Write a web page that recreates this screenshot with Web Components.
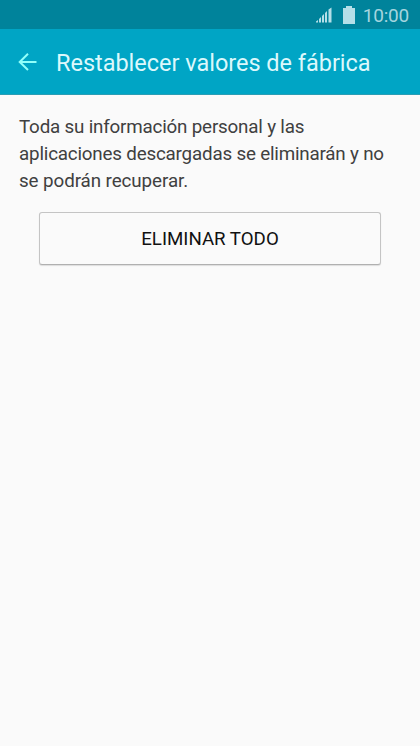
<!DOCTYPE html>
<html lang="es"><head><meta charset="utf-8"><title>Restablecer valores de fábrica</title>
<style>html,body{margin:0;height:100%;background:#fafafa;font-family:Roboto,sans-serif}</style></head><body>
<reset-screen></reset-screen>
<script>
const define=(name,html)=>customElements.define(name,class extends HTMLElement{constructor(){super();this.attachShadow({mode:'open'}).innerHTML=html;}});
define('status-bar',`<style>:host{display:flex;height:29px;box-sizing:border-box;background:#00839b;color:#b5dfe8;align-items:center;justify-content:flex-end;padding-right:11px;font-size:19px}.signal{margin-right:11px}.battery{margin-right:8px}svg{display:block}span{line-height:29px;padding-top:1px;letter-spacing:-.2px;color:#a5d5df}</style>
<svg class="signal" width="16" height="16" viewBox="0 0 16 16" fill="currentColor"><path d="M0 15.5v-1l2-1.5v2.5zM3 15.5v-3.5l2-2v5.5zM6 15.5v-6.5l2-2v8.5zM9 15.5v-9.5l2-2v11.5zM12.5 15.5v-13l3-2v15z"/></svg>
<svg class="battery" width="12" height="18" viewBox="0 0 12 18" fill="currentColor"><path d="M3 0h6v2h3v16H0V2h3z"/></svg><span><slot></slot></span>`);
define('app-bar',`<style>:host{display:flex;height:66px;box-sizing:border-box;background:#00a5c5;border-bottom:1px solid #2b9db4;color:#dcf8fc;align-items:center;padding-left:18px}svg{margin-right:19px;color:#91fffa}h1{font-size:23.5px;font-weight:400;letter-spacing:-.02px;margin:0;line-height:30px;padding-top:2px;white-space:nowrap}</style>
<svg width="19" height="18" viewBox="0 0 19 18" fill="none" stroke="currentColor" stroke-width="2"><path d="M18.5 9H2M10 .7L1.7 9l8.3 8"/></svg><h1><slot></slot></h1>`);
define('warning-text',`<style>:host{display:block;font-size:18.8px;letter-spacing:-.19px;line-height:27px;color:#404040;white-space:nowrap}</style><slot></slot>`);
define('action-button',`<style>:host{display:block;margin:17px 20px 0}button{display:block;width:100%;height:53px;border:1px solid #c4c4c4;border-bottom-color:#b0b0b0;border-radius:3px;background:#fafafa;font:18.7px Roboto,sans-serif;color:#111;padding:0;box-shadow:0 1px 1px #ddd}</style><button><slot></slot></button>`);
define('reset-screen',`<style>:host{display:block}main{padding:19px 19px 0}.loose{letter-spacing:-.08px}</style><status-bar>10:00</status-bar><app-bar>Restablecer valores de fábrica</app-bar><main><warning-text>Toda su información personal y las<br>aplicaciones descargadas se eliminarán y no<br><span class="loose">se podrán recuperar.</span></warning-text><action-button>ELIMINAR TODO</action-button></main>`);
</script></body></html>
